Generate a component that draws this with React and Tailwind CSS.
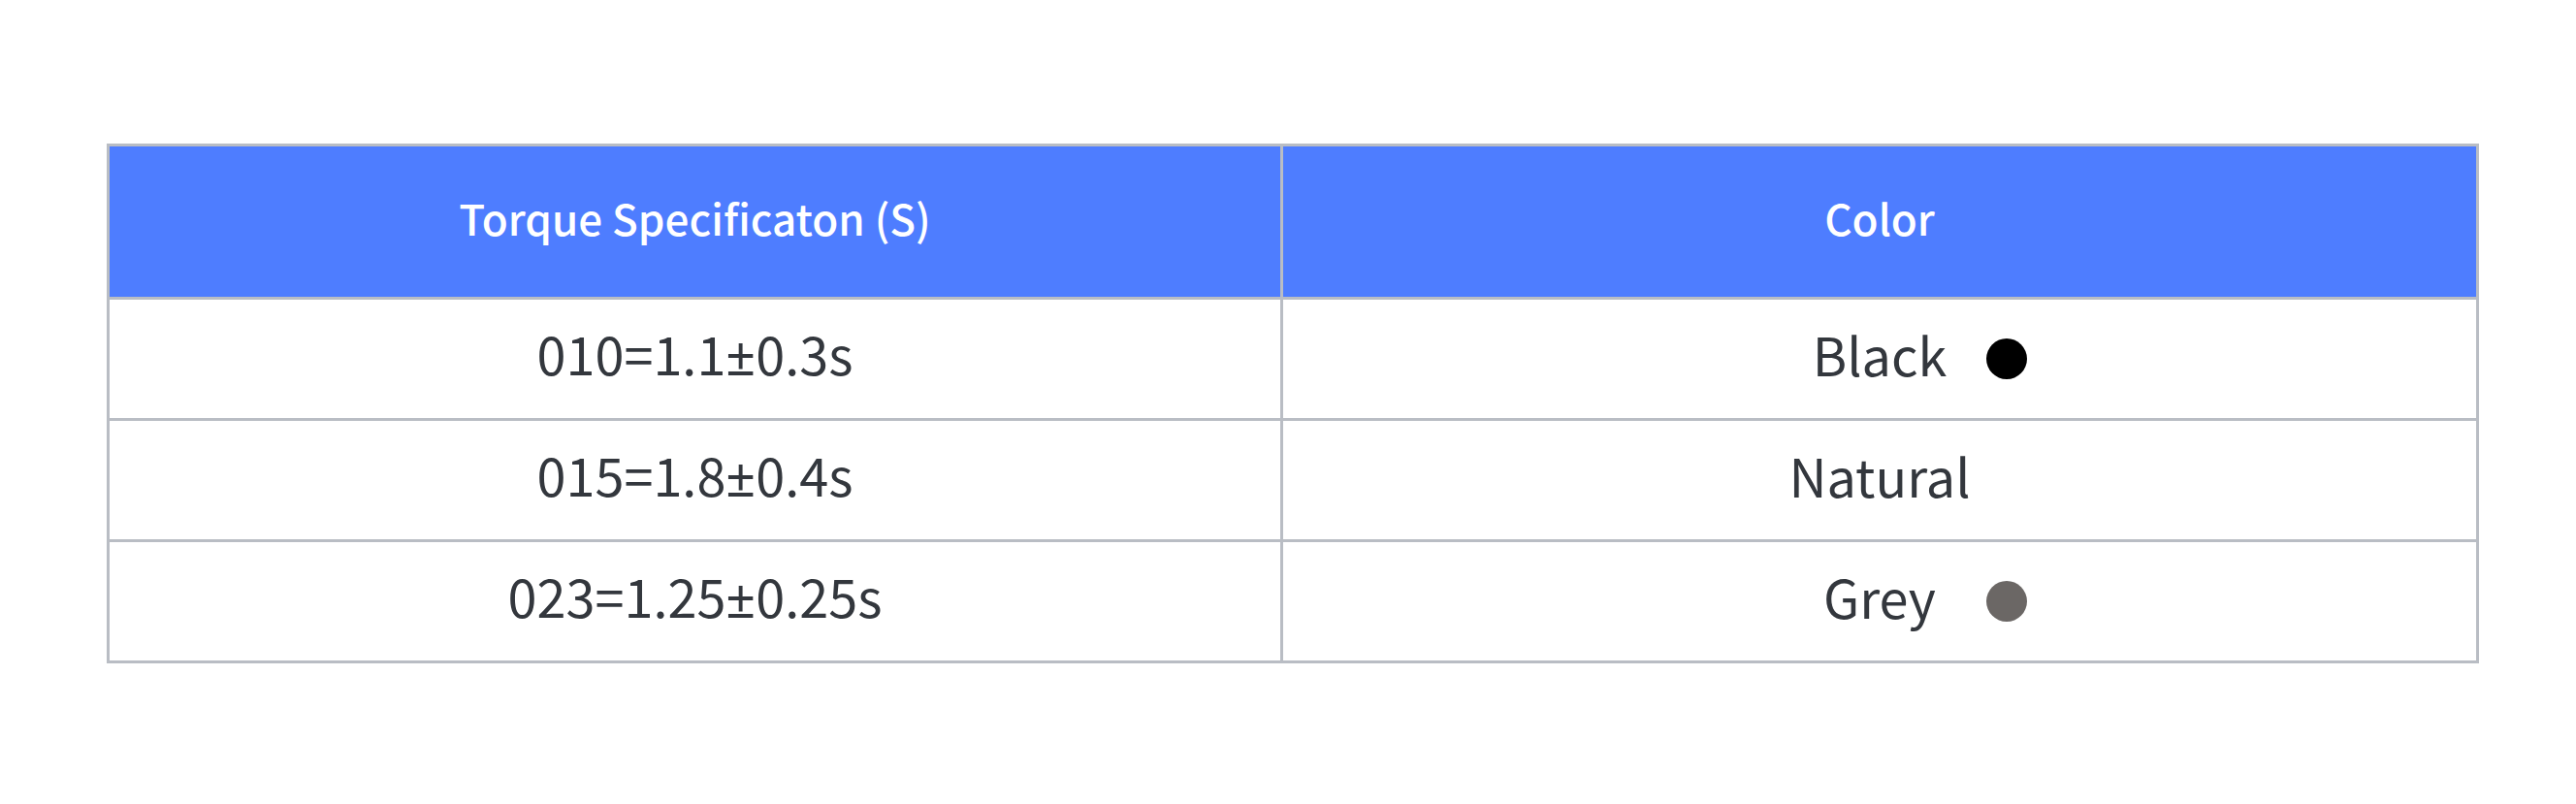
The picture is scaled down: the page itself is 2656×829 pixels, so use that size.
import React from 'react';

const rows = [
  { spec: ['010=1.1', '0.3s'], color: 'Black', dot: 'bg-black' },
  { spec: ['015=1.8', '0.4s'], color: 'Natural', dot: null },
  { spec: ['023=1.25', '0.25s'], color: 'Grey', dot: 'bg-[#6b6765]' },
];

const App = () => {
  return (
    <div
      className="w-[2656px] h-[829px] bg-white pt-[148px] pl-[110px]"
      style={{ fontFamily: '"Noto Sans CJK SC", "Noto Sans", sans-serif' }}
    >
      <table className="w-[2446px] table-fixed border-collapse border-[3px] border-[#b9bdc4]">
        <colgroup>
          <col className="w-[1210px]" />
          <col />
        </colgroup>
        <thead>
          <tr className="h-[158px] bg-[#4e7dff]">
            <th className="border-[3px] border-[#b9bdc4] pb-[10px] text-center text-[44px] font-medium text-white leading-none">
              Torque Specificaton (S)
            </th>
            <th className="border-[3px] border-[#b9bdc4] pb-[10px] text-center text-[44px] font-medium text-white leading-none">
              Color
            </th>
          </tr>
        </thead>
        <tbody>
          {rows.map((row) => (
            <tr key={row.color} className="h-[125px]">
              <td className="border-[3px] border-[#b9bdc4] pb-[10px] text-center text-[54px] text-[#33373d] leading-none">
                {row.spec[0]}
                <span className="font-['Noto_Sans',sans-serif]">±</span>
                {row.spec[1]}
              </td>
              <td className="relative border-[3px] border-[#b9bdc4] pb-[10px] text-center text-[54px] text-[#33373d] leading-none">
                {row.color}
                {row.dot && (
                  <span
                    className={`absolute left-[calc(50%+110px)] top-1/2 -translate-y-1/2 w-[42px] h-[42px] rounded-full ${row.dot}`}
                  />
                )}
              </td>
            </tr>
          ))}
        </tbody>
      </table>
    </div>
  );
};

export default App;
